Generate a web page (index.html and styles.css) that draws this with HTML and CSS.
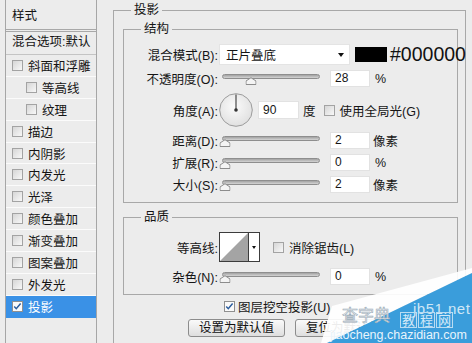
FILE: index.html
```html
<!DOCTYPE html>
<html lang="zh">
<head>
<meta charset="utf-8">
<title>图层样式 - 投影</title>
<link rel="stylesheet" href="styles.css">
</head>
<body>
<div class="dialog">
  <aside class="styles-panel">
    <div class="sp-head">样式</div>
    <div class="sp-blend">混合选项:默认</div>
    <ul class="sp-list">
      <li class="sp-item"><span class="cb"></span>斜面和浮雕</li>
      <li class="sp-item sub"><span class="cb"></span>等高线</li>
      <li class="sp-item sub"><span class="cb"></span>纹理</li>
      <li class="sp-item"><span class="cb"></span>描边</li>
      <li class="sp-item"><span class="cb"></span>内阴影</li>
      <li class="sp-item"><span class="cb"></span>内发光</li>
      <li class="sp-item"><span class="cb"></span>光泽</li>
      <li class="sp-item"><span class="cb"></span>颜色叠加</li>
      <li class="sp-item"><span class="cb"></span>渐变叠加</li>
      <li class="sp-item"><span class="cb"></span>图案叠加</li>
      <li class="sp-item"><span class="cb"></span>外发光</li>
      <li class="sp-item selected"><span class="cb checked"><svg viewBox="0 0 11 11" width="9" height="9"><path d="M1.5 5.5 L4 8.2 L9.3 1.8" fill="none" stroke="#2b5d9e" stroke-width="1.8"/></svg></span>投影</li>
    </ul>
  </aside>

  <main class="settings">
    <fieldset class="group outer">
      <legend>投影</legend>

      <fieldset class="group inner structure">
        <legend>结构</legend>
        <div class="row r-blend">
          <span class="lbl">混合模式(B):</span>
          <div class="select">正片叠底<span class="arrow"></span></div>
          <span class="swatch"></span>
          <span class="hex">#000000</span>
        </div>
        <div class="row r-field first">
          <span class="lbl">不透明度(O):</span>
          <div class="slider" style="--v:0.28"><span class="track"></span><svg class="thumb" viewBox="0 0 11 8" width="11" height="8"><path d="M0.5 7.5 V4 L5.5 0.7 L10.5 4 V7.5 Z" fill="#f4f4f4" stroke="#8c8c8c"/></svg></div>
          <span class="num">28</span>
          <span class="unit">%</span>
        </div>
        <div class="row r-angle">
          <span class="lbl">角度(A):</span>
          <svg class="dial" viewBox="0 0 34 34" width="34" height="34">
            <defs><radialGradient id="dg" cx="0.45" cy="0.4" r="0.7"><stop offset="0" stop-color="#fbfbfb"/><stop offset="1" stop-color="#dcdcdc"/></radialGradient></defs>
            <circle cx="17" cy="17" r="16.3" fill="url(#dg)" stroke="#9b9b9b"/>
            <line x1="17" y1="17" x2="17" y2="1.5" stroke="#4a4a4a" stroke-width="1.2"/>
            <circle cx="17" cy="17" r="1.8" fill="#333"/>
          </svg>
          <span class="num angle">90</span>
          <span class="unit deg">度</span>
          <span class="cb gl"></span>
          <span class="cb-text">使用全局光(G)</span>
        </div>
        <div class="row r-field">
          <span class="lbl">距离(D):</span>
          <div class="slider" style="--v:0"><span class="track"></span><svg class="thumb" viewBox="0 0 11 8" width="11" height="8"><path d="M0.5 7.5 V4 L5.5 0.7 L10.5 4 V7.5 Z" fill="#f4f4f4" stroke="#8c8c8c"/></svg></div>
          <span class="num">2</span>
          <span class="unit px">像素</span>
        </div>
        <div class="row r-field">
          <span class="lbl">扩展(R):</span>
          <div class="slider" style="--v:0"><span class="track"></span><svg class="thumb" viewBox="0 0 11 8" width="11" height="8"><path d="M0.5 7.5 V4 L5.5 0.7 L10.5 4 V7.5 Z" fill="#f4f4f4" stroke="#8c8c8c"/></svg></div>
          <span class="num">0</span>
          <span class="unit">%</span>
        </div>
        <div class="row r-field last">
          <span class="lbl">大小(S):</span>
          <div class="slider" style="--v:0"><span class="track"></span><svg class="thumb" viewBox="0 0 11 8" width="11" height="8"><path d="M0.5 7.5 V4 L5.5 0.7 L10.5 4 V7.5 Z" fill="#f4f4f4" stroke="#8c8c8c"/></svg></div>
          <span class="num">2</span>
          <span class="unit px">像素</span>
        </div>
      </fieldset>

      <fieldset class="group inner quality">
        <legend>品质</legend>
        <div class="row r-contour">
          <span class="lbl">等高线:</span>
          <div class="contour">
            <svg class="contour-preview" viewBox="0 0 28 28" width="28" height="28"><rect width="28" height="28" fill="#fff"/><polygon points="0,28 28,0 28,28" fill="#a4a4a4"/></svg>
            <span class="contour-drop"><span class="arrow"></span></span>
          </div>
          <span class="cb aa"></span>
          <span class="cb-text">消除锯齿(L)</span>
        </div>
        <div class="row r-field last">
          <span class="lbl">杂色(N):</span>
          <div class="slider" style="--v:0"><span class="track"></span><svg class="thumb" viewBox="0 0 11 8" width="11" height="8"><path d="M0.5 7.5 V4 L5.5 0.7 L10.5 4 V7.5 Z" fill="#f4f4f4" stroke="#8c8c8c"/></svg></div>
          <span class="num">0</span>
          <span class="unit">%</span>
        </div>
      </fieldset>

      <div class="knockout">
        <span class="cb checked"><svg viewBox="0 0 11 11" width="9" height="9"><path d="M1.5 5.5 L4 8.2 L9.3 1.8" fill="none" stroke="#2b5d9e" stroke-width="1.8"/></svg></span>
        <span class="cb-text">图层挖空投影(U)</span>
      </div>
      <div class="buttons">
        <button class="btn">设置为默认值</button>
        <button class="btn">复位为默认值</button>
      </div>
    </fieldset>
  </main>

  <div class="watermark">
    <svg class="wm-bg" viewBox="0 0 160 75" width="160" height="75">
      <polygon points="160,0 20,38 9,75 15,75 160,5" fill="#ffffff" fill-opacity="0.92"/>
      <polygon points="160,5 160,75 15,75" fill="#3a9ddb"/>
    </svg>
    <span class="wm-site">jb51.net</span>
    <span class="wm-cn">查字典</span>
    <span class="wm-jc"><b>教</b><b>程</b><b>网</b></span>
    <span class="wm-url">jiaocheng.chazidian.com</span>
  </div>
</div>
</body>
</html>
```

FILE: styles.css
```css
* { box-sizing: border-box; }

html, body { margin: 0; padding: 0; }

body {
  width: 472px;
  height: 343px;
  overflow: hidden;
  background: #ececec;
  font-family: "Liberation Sans", "Noto Sans CJK SC", sans-serif;
  font-size: 12.5px;
  color: #151515;
}

.dialog {
  position: relative;
  display: flex;
  height: 343px;
  overflow: hidden;
}

/* ---------- left styles list ---------- */
.styles-panel {
  flex: none;
  margin-left: 5px;
  width: 92px;
  border-left: 1px solid #a6a6a6;
  border-right: 1px solid #a6a6a6;
  background: #ececec;
}

.sp-head {
  height: 32px;
  padding: 6px 0 0 6px;
  line-height: 20px;
  border-bottom: 3px double #a8a8a8;
}

.sp-blend {
  height: 23px;
  padding-left: 6px;
  line-height: 21px;
  border-bottom: 1px solid #c4c4c4;
}

.sp-list {
  list-style: none;
  margin: 0;
  padding: 0;
}

.sp-item {
  display: flex;
  align-items: center;
  gap: 5px;
  height: 21.9px;
  padding-left: 6px;
  border-bottom: 1px solid #fbfbfb;
  white-space: nowrap;
}

.sp-item.sub { padding-left: 20px; }

.sp-item.selected {
  background: #3a91e6;
  color: #fff;
  border-bottom-color: #3a91e6;
}

.cb {
  flex: none;
  display: inline-flex;
  align-items: center;
  justify-content: center;
  width: 11px;
  height: 11px;
  border: 1px solid #a3a3a3;
  background: linear-gradient(135deg, #d6d6d6, #f8f8f8);
}

.cb.checked {
  background: #fafafa;
  border-color: #8f8f8f;
}

/* ---------- right settings ---------- */
.settings {
  flex: none;
  margin-left: 16px;
}

.group {
  margin: 0;
  padding: 0;
  min-width: 0;
  border: 1px solid #a8a8a8;
}

.group > legend {
  margin-left: 17px;
  padding: 0 3px;
  height: 16px;
  line-height: 16px;
}

.outer {
  width: 353px;
  margin-top: 2px;
  padding-bottom: 40px;
}

.inner {
  width: 335px;
  margin-left: 9px;
}

.structure {
  margin-top: 3px;
  padding: 7px 0 9px 0;
}

.quality {
  margin-top: 6px;
  padding: 7px 0 9px 0;
}

.row {
  display: flex;
  align-items: center;
  white-space: nowrap;
}

.lbl {
  flex: none;
  width: 94px;
  text-align: right;
}

.r-blend { height: 21px; margin-bottom: 5px; }
.r-field { height: 17px; margin-bottom: 5px; }
.r-field.first { margin-bottom: 6px; }
.r-field.last { margin-bottom: 0; }
.r-angle { height: 34px; margin-bottom: 5px; }
.r-contour { height: 30px; margin-bottom: 6px; }

.select {
  flex: none;
  display: flex;
  align-items: center;
  margin-left: 1px;
  width: 131px;
  height: 21px;
  padding-left: 6px;
  background: #fff;
  border: 1px solid #e4e4e4;
}

.arrow {
  width: 0;
  height: 0;
  border-left: 3.5px solid transparent;
  border-right: 3.5px solid transparent;
  border-top: 4px solid #111;
}

.select .arrow {
  margin-left: auto;
  margin-right: 5px;
}

.swatch {
  flex: none;
  margin-left: 5px;
  width: 32px;
  height: 15px;
  background: #000;
}

.hex {
  margin-left: 3px;
  font-family: "Liberation Sans", sans-serif;
  font-size: 19.5px;
  color: #111;
}

.slider {
  position: relative;
  flex: none;
  margin-left: 4px;
  width: 98px;
  height: 17px;
}

.track {
  position: absolute;
  left: 0;
  right: 0;
  top: 4px;
  height: 5px;
  border-radius: 3px;
  border: 1px solid #8e8e8e;
  background: linear-gradient(#a2a2a2, #d4d4d4);
}

.thumb {
  position: absolute;
  top: 7px;
  left: calc(3px + var(--v) * 92px);
  transform: translateX(-50%);
}

.num {
  flex: none;
  margin-left: 10px;
  width: 40px;
  height: 17px;
  padding-left: 4px;
  line-height: 15px;
  font-size: 12px;
  background: #fff;
  border: 1px solid #e2e2e2;
}

.unit { margin-left: 5px; }
.unit.px { margin-left: 3px; }

.dial { flex: none; margin-left: 1px; }

.num.angle {
  margin-left: 5px;
  width: 41px;
  height: 18px;
  line-height: 16px;
}

.unit.deg { margin-left: 4px; }
.cb.gl { margin-left: 8px; }
.cb-text { margin-left: 5px; }

.contour {
  flex: none;
  display: flex;
  margin-left: 1px;
  width: 41px;
  height: 30px;
  border: 1px solid #3c3c3c;
  background: #fff;
}

.contour-preview { flex: none; display: block; }

.contour-drop {
  flex: 1;
  display: flex;
  align-items: center;
  justify-content: center;
  border-left: 1px solid #3c3c3c;
}

.contour-drop .arrow {
  border-left-width: 2.5px;
  border-right-width: 2.5px;
  border-top-width: 3px;
}

.cb.aa { margin-left: 13px; }

.knockout {
  display: flex;
  align-items: center;
  height: 13px;
  margin-top: 5px;
  padding-left: 110px;
}

.knockout .cb-text { margin-left: 3px; }

.buttons {
  display: flex;
  gap: 10px;
  margin-top: 6px;
  padding-left: 74px;
}

.btn {
  flex: none;
  width: 97px;
  height: 18px;
  padding: 0;
  font: inherit;
  line-height: 16px;
  color: #111;
  border: 1px solid #8c8c8c;
  border-radius: 3px;
  background: linear-gradient(#fafafa, #dedede);
}

/* ---------- watermark overlay ---------- */
.watermark {
  position: absolute;
  right: 0;
  bottom: 0;
  width: 160px;
  height: 75px;
  overflow: hidden;
  font-family: "Liberation Sans", "Noto Sans CJK SC", sans-serif;
}

.wm-bg {
  position: absolute;
  left: 0;
  top: 0;
  display: block;
}

.wm-site, .wm-cn, .wm-jc, .wm-url {
  position: absolute;
  white-space: nowrap;
  line-height: 1;
}

.wm-site {
  left: 101px;
  top: 33px;
  font-size: 15px;
  letter-spacing: 0.5px;
  color: #cfe7f6;
}

.wm-cn {
  left: 30px;
  top: 40px;
  font-size: 16px;
  color: #f7fafc;
  -webkit-text-stroke: 0.6px #98a9b5;
}

.wm-jc {
  left: 88px;
  top: 44px;
  display: flex;
  gap: 1px;
}

.wm-jc b {
  width: 17px;
  height: 16px;
  font-weight: normal;
  font-size: 13px;
  line-height: 15px;
  text-align: center;
  color: #d4eaf8;
  border: 1px solid #b9dcf2;
}

.wm-url {
  left: 18px;
  top: 61px;
  font-size: 12.5px;
  color: #e8f4fc;
}
```
